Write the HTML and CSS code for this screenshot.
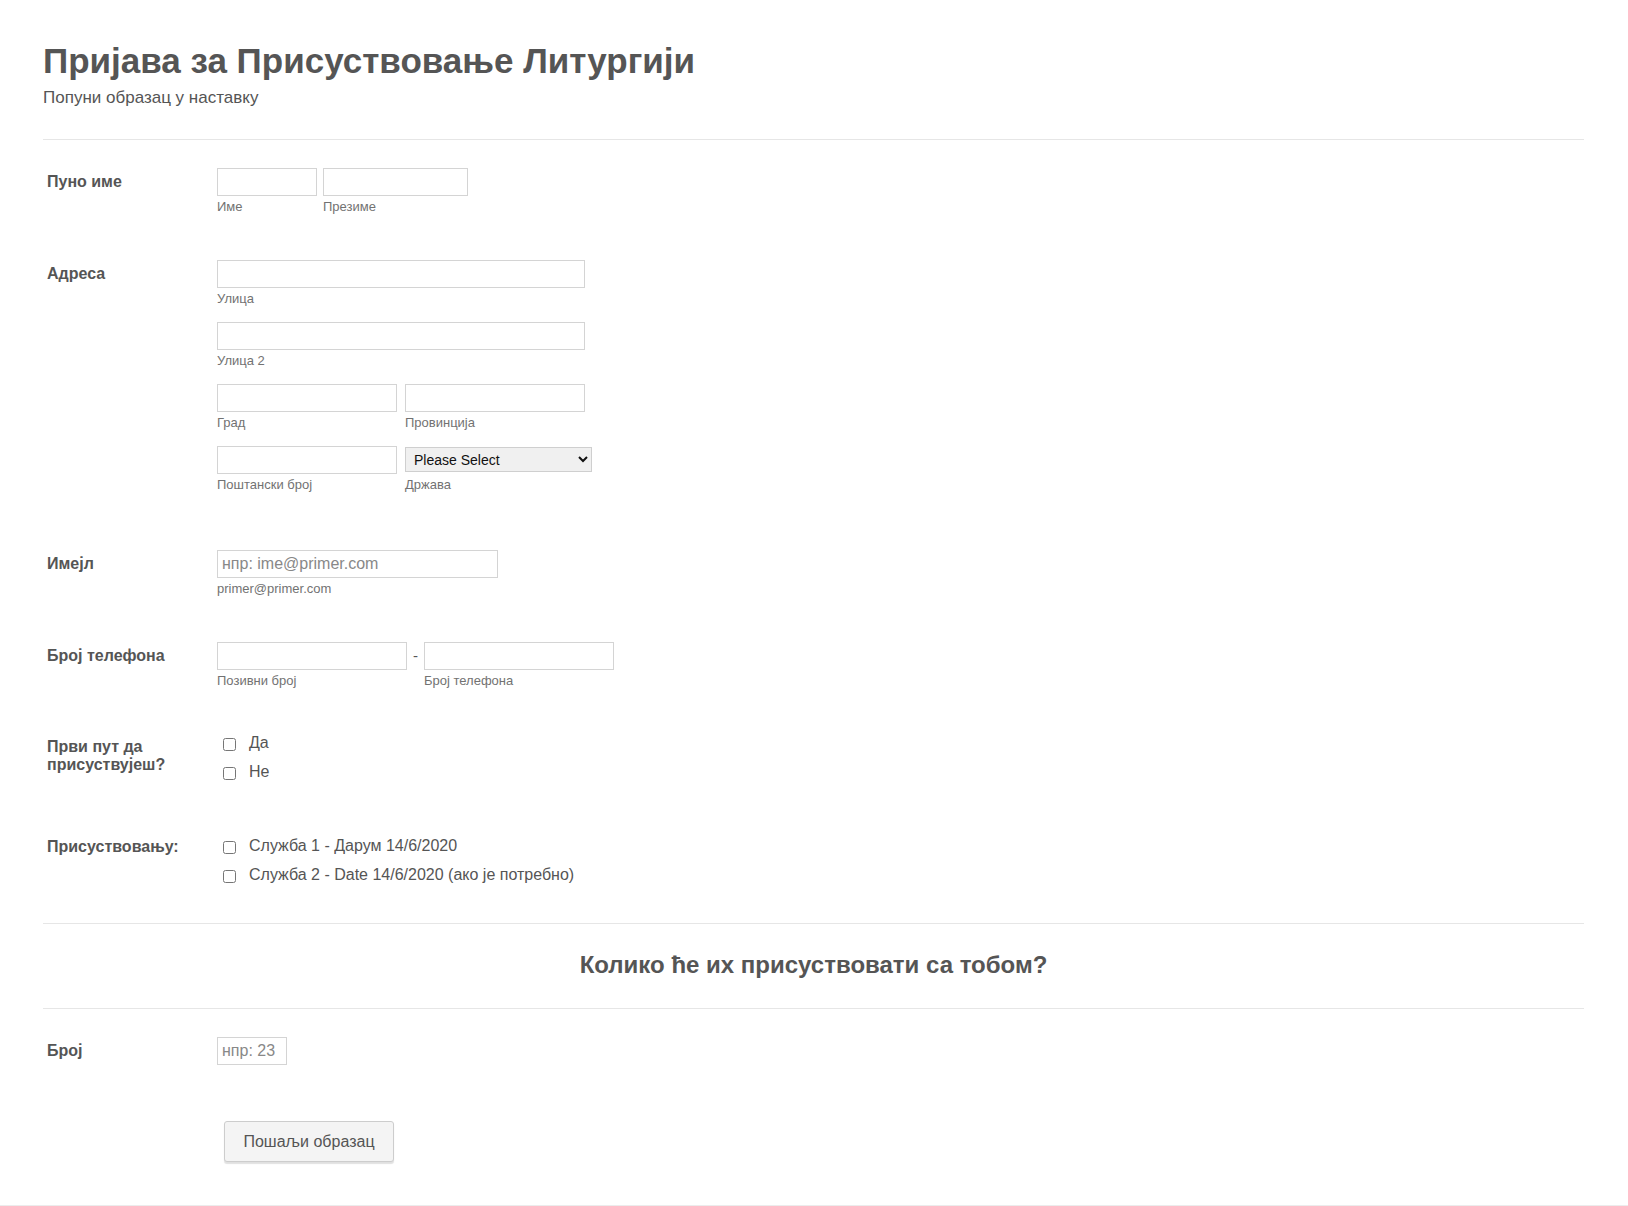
FILE: index.html
```html
<!DOCTYPE html>
<html lang="sr">
<head>
    <meta charset="UTF-8">
    <meta name="viewport" content="width=device-width, initial-scale=1.0">
    <title>Пријава за Присуствовање Литургији</title>
    <link rel="stylesheet" href="styles.css">
</head>
<body>
    <div class="page">
    <form class="form-all">
        <!-- Header -->
        <div class="form-header">
            <h1>Пријава за Присуствовање Литургији</h1>
            <div class="form-subheader">Попуни образац у наставку</div>
        </div>

        <div class="form-line first-line">
            <label class="form-label">Пуно име</label>
            <div class="form-input">
                <div class="input-row name-row">
                    <div class="sub-field">
                        <input type="text" class="w-first">
                        <span class="sublabel">Име</span>
                    </div>
                    <div class="sub-field">
                        <input type="text" class="w-last">
                        <span class="sublabel">Презиме</span>
                    </div>
                </div>
            </div>
        </div>

        <div class="form-line">
            <label class="form-label">Адреса</label>
            <div class="form-input address">
                <div class="sub-field">
                    <input type="text" class="w-street">
                    <span class="sublabel">Улица</span>
                </div>
                <div class="sub-field">
                    <input type="text" class="w-street">
                    <span class="sublabel">Улица 2</span>
                </div>
                <div class="input-row">
                    <div class="sub-field">
                        <input type="text" class="w-half">
                        <span class="sublabel">Град</span>
                    </div>
                    <div class="sub-field">
                        <input type="text" class="w-half">
                        <span class="sublabel">Провинција</span>
                    </div>
                </div>
                <div class="input-row">
                    <div class="sub-field">
                        <input type="text" class="w-half">
                        <span class="sublabel">Поштански број</span>
                    </div>
                    <div class="sub-field">
                        <select class="country">
                            <option>Please Select</option>
                        </select>
                        <span class="sublabel">Држава</span>
                    </div>
                </div>
            </div>
        </div>

        <div class="form-line">
            <label class="form-label">Имејл</label>
            <div class="form-input">
                <div class="sub-field">
                    <input type="email" class="w-email" placeholder="нпр: ime@primer.com">
                    <span class="sublabel">primer@primer.com</span>
                </div>
            </div>
        </div>

        <div class="form-line">
            <label class="form-label">Број телефона</label>
            <div class="form-input">
                <div class="input-row phone">
                    <div class="sub-field">
                        <input type="tel" class="w-phone">
                        <span class="sublabel">Позивни број</span>
                    </div>
                    <span class="phone-dash">-</span>
                    <div class="sub-field">
                        <input type="tel" class="w-phone">
                        <span class="sublabel">Број телефона</span>
                    </div>
                </div>
            </div>
        </div>

        <div class="form-line check-line">
            <label class="form-label">Први пут да присуствујеш?</label>
            <div class="form-input options">
                <label class="option"><input type="checkbox"> Да</label>
                <label class="option"><input type="checkbox"> Не</label>
            </div>
        </div>

        <div class="form-line check-line attend">
            <label class="form-label">Присуствовању:</label>
            <div class="form-input">
                <label class="option"><input type="checkbox"> Служба 1 - Дарум 14/6/2020</label>
                <label class="option"><input type="checkbox"> Служба 2 - Date 14/6/2020 (ако је потребно)</label>
            </div>
        </div>

        <div class="form-section">
            <h2>Колико ће их присуствовати са тобом?</h2>
        </div>

        <div class="form-line count-line">
            <label class="form-label">Број</label>
            <div class="form-input">
                <input type="number" class="w-count" placeholder="нпр: 23">
            </div>
        </div>

        <div class="form-buttons">
            <button type="submit">Пошаљи образац</button>
        </div>
    </form>
    </div>
</body>
</html>
```

FILE: styles.css
```css
body {
    margin: 0;
    font-family: 'Liberation Sans', Arial, sans-serif;
    color: #555;
    background: #fff;
}

.page {
    border-bottom: 1px solid #ececec;
}

.form-all {
    margin: 0 44px 0 43px;
    padding-bottom: 43px;
}

.form-header {
    padding-top: 41px;
    padding-bottom: 31px;
    border-bottom: 1px solid #e6e6e6;
}

.form-header h1 {
    margin: 0;
    font-size: 35px;
    line-height: 40px;
    font-weight: bold;
}

.form-subheader {
    font-size: 17px;
    line-height: 20px;
    margin-top: 7px;
}

.form-line {
    display: flex;
    padding: 0 4px;
    margin-top: 46px;
}

.form-line.first-line {
    margin-top: 28px;
}

.form-label {
    width: 170px;
    flex-shrink: 0;
    padding-top: 5px;
    padding-right: 20px;
    box-sizing: border-box;
    font-size: 16px;
    line-height: 18px;
    font-weight: bold;
}

.form-input {
    display: flex;
    flex-direction: column;
}

.form-input.address {
    gap: 16px;
    margin-bottom: 12px;
}

.input-row {
    display: flex;
    gap: 8px;
}

.input-row.name-row {
    gap: 6px;
}

.sub-field {
    display: flex;
    flex-direction: column;
}

input[type="text"],
input[type="email"],
input[type="tel"],
input[type="number"] {
    height: 28px;
    box-sizing: border-box;
    border: 1px solid #d4d4d4;
    padding: 0 4px;
    margin: 0;
    font-family: inherit;
    font-size: 16px;
    color: #555;
    background: #fff;
}

input::placeholder {
    color: #888;
}

.w-first { width: 100px; }
.w-last { width: 145px; }
.w-street { width: 368px; }
.w-half { width: 180px; }
.w-email { width: 281px; }
.w-phone { width: 190px; }
.w-count { width: 70px; height: 27px; -moz-appearance: textfield; }

.w-count::-webkit-inner-spin-button,
.w-count::-webkit-outer-spin-button {
    -webkit-appearance: none;
    margin: 0;
}

.input-row.phone {
    gap: 0;
}

.phone-dash {
    width: 17px;
    text-align: center;
    font-size: 15px;
    line-height: 28px;
}

.sublabel {
    margin-top: 3px;
    font-size: 13px;
    line-height: 15px;
    color: #727272;
}

.country {
    width: 187px;
    height: 25px;
    margin: 1px 0 2px;
    border: 1px solid #cfcfcf;
    background: #f0f0f0;
    font-family: inherit;
    font-size: 14px;
    color: #111;
    padding: 0 4px;
}

.form-line.check-line {
    margin-top: 43px;
}

.form-line.check-line .form-label {
    padding-top: 7px;
}

.form-input.options {
    margin-top: -3px;
}

.form-line.attend {
    margin-top: 45px;
}

.option {
    display: flex;
    align-items: center;
    height: 29px;
    font-size: 16px;
    color: #555;
}

.option input {
    width: 13px;
    height: 13px;
    margin: 3px 13px 0 6px;
}

.form-section {
    margin-top: 34px;
    border-top: 1px solid #e6e6e6;
    border-bottom: 1px solid #e6e6e6;
    padding: 26px 0 28px;
    text-align: center;
}

.form-section h2 {
    margin: 0;
    font-size: 24px;
    line-height: 30px;
    font-weight: bold;
}

.form-line.count-line {
    margin-top: 28px;
}

.form-buttons {
    padding-left: 181px;
    margin-top: 56px;
}

.form-buttons button {
    width: 170px;
    height: 41px;
    border: 1px solid #cdcdcd;
    border-radius: 3px;
    background: #f4f4f4;
    box-shadow: 0 2px 1px rgba(0, 0, 0, 0.12);
    font-family: inherit;
    font-size: 16px;
    color: #555;
    cursor: pointer;
}
```
